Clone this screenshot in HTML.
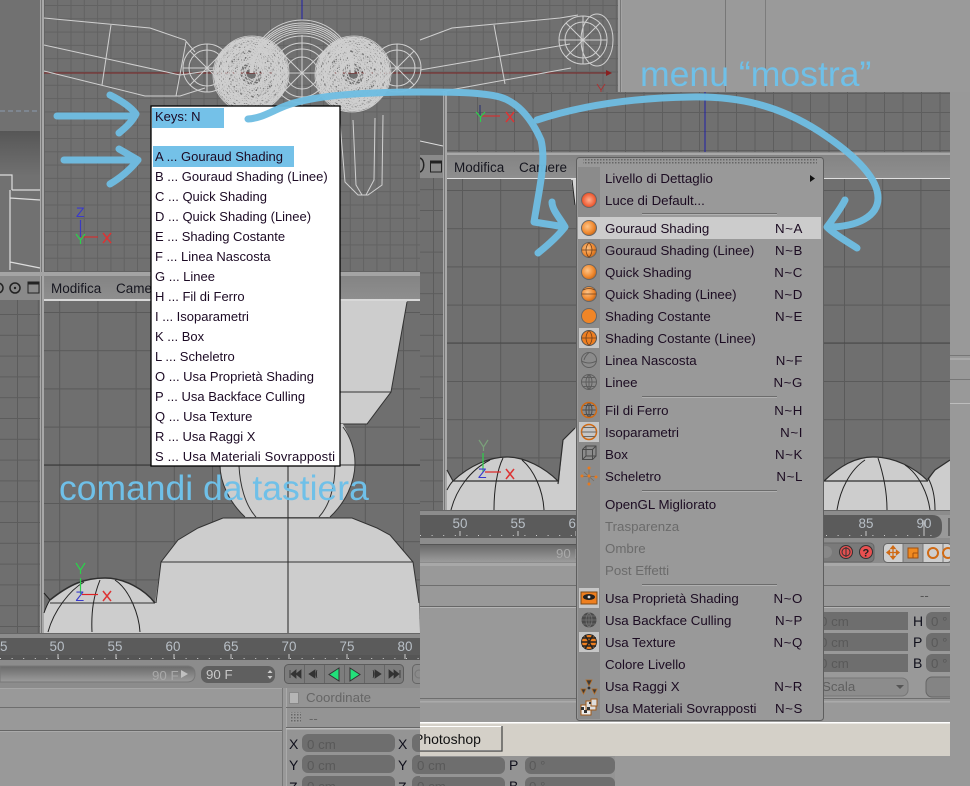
<!DOCTYPE html>
<html><head><meta charset="utf-8"><style>
html,body{margin:0;padding:0;background:#999}
svg{display:block;font-family:"Liberation Sans",sans-serif}
.m{font-size:13.3px;fill:#1c0c22}
.s{font-size:13.3px;fill:#1c0c22;letter-spacing:.6px}
.d{font-size:13.3px;fill:#6b6b6b}
.k{font-size:13px;fill:#1c0a24}
.t{font-size:13.4px;fill:#b8bfc6}
.f{font-size:13.3px;fill:#595959}
.l{font-size:14px;fill:#10101c}
</style></head><body>
<svg width="970" height="786" viewBox="0 0 970 786" xmlns="http://www.w3.org/2000/svg">
<defs>
<clipPath id="c2"><rect x="420" y="92" width="530" height="664"/></clipPath>
<pattern id="g1" width="13.3" height="13.3" x="4" y="5" patternUnits="userSpaceOnUse"><rect width="13.3" height="13.3" fill="#707070"/><rect width="1" height="13.3" fill="#626262"/><rect width="13.3" height="1" fill="#626262"/></pattern>
<pattern id="g2" width="38.2" height="38.2" x="21" y="312" patternUnits="userSpaceOnUse"><rect width="38.2" height="38.2" fill="#6f6f6f"/><rect width="1" height="38.2" fill="#5a5a5a"/><rect width="38.2" height="1" fill="#5a5a5a"/></pattern>
<pattern id="g3" width="38.2" height="38.2" x="462" y="190" patternUnits="userSpaceOnUse"><rect width="38.2" height="38.2" fill="#6f6f6f"/><rect width="1" height="38.2" fill="#5a5a5a"/><rect width="38.2" height="1" fill="#5a5a5a"/></pattern>
<pattern id="g4" width="18.5" height="19" x="847" y="112" patternUnits="userSpaceOnUse"><rect width="18.5" height="19" fill="#707070"/><rect width="1" height="19" fill="#5e5e5e"/><rect width="18.5" height="1" fill="#5e5e5e"/></pattern>
<pattern id="g5" width="20.8" height="20.8" x="17" y="2" patternUnits="userSpaceOnUse"><rect width="20.8" height="20.8" fill="#6f6f6f"/><rect width="1" height="20.8" fill="#5c5c5c"/><rect width="20.8" height="1" fill="#5c5c5c"/></pattern>
<pattern id="hat" width="3" height="3" patternUnits="userSpaceOnUse"><rect width="3" height="3" fill="#999"/><rect width="1.5" height="1.5" fill="#666"/></pattern>
<linearGradient id="sl" x1="0" y1="0" x2="0" y2="1"><stop offset="0" stop-color="#6a6a6a"/><stop offset="1" stop-color="#9c9c9c"/></linearGradient>
<linearGradient id="tb" x1="0" y1="0" x2="0" y2="1"><stop offset="0" stop-color="#848484"/><stop offset="1" stop-color="#8e8e8e"/></linearGradient>
<linearGradient id="gnd" x1="0" y1="0" x2="0" y2="1"><stop offset="0" stop-color="#565656"/><stop offset=".2" stop-color="#5c5c5c"/><stop offset="1" stop-color="#707070"/></linearGradient>
<radialGradient id="or" cx=".4" cy=".4" r=".7"><stop offset="0" stop-color="#fdc488"/><stop offset=".6" stop-color="#f08a30"/><stop offset="1" stop-color="#b85c14"/></radialGradient>
<radialGradient id="rd" cx=".5" cy=".5" r=".6"><stop offset="0" stop-color="#fdb090"/><stop offset=".7" stop-color="#ee5d35"/><stop offset="1" stop-color="#b03818"/></radialGradient>
<g id="sph" fill="none" stroke="#cfcfcf" stroke-width=".8">
<circle r="37"/><circle r="34"/><circle r="30"/>
<ellipse rx="36" ry="12"/><ellipse rx="36" ry="12" transform="rotate(15)"/><ellipse rx="36" ry="12" transform="rotate(30)"/><ellipse rx="36" ry="12" transform="rotate(45)"/><ellipse rx="36" ry="12" transform="rotate(60)"/><ellipse rx="36" ry="12" transform="rotate(75)"/><ellipse rx="36" ry="12" transform="rotate(90)"/><ellipse rx="36" ry="12" transform="rotate(105)"/><ellipse rx="36" ry="12" transform="rotate(120)"/><ellipse rx="36" ry="12" transform="rotate(135)"/><ellipse rx="36" ry="12" transform="rotate(150)"/><ellipse rx="36" ry="12" transform="rotate(165)"/>
<ellipse rx="36" ry="25"/><ellipse rx="36" ry="25" transform="rotate(20)"/><ellipse rx="36" ry="25" transform="rotate(40)"/><ellipse rx="36" ry="25" transform="rotate(60)"/><ellipse rx="36" ry="25" transform="rotate(80)"/><ellipse rx="36" ry="25" transform="rotate(100)"/><ellipse rx="36" ry="25" transform="rotate(120)"/><ellipse rx="36" ry="25" transform="rotate(140)"/><ellipse rx="36" ry="25" transform="rotate(160)"/>
<ellipse rx="28" ry="18" transform="rotate(10)"/><ellipse rx="28" ry="18" transform="rotate(50)"/><ellipse rx="28" ry="18" transform="rotate(95)"/><ellipse rx="28" ry="18" transform="rotate(140)"/>
<ellipse rx="22" ry="6" transform="rotate(25)"/><ellipse rx="22" ry="6" transform="rotate(70)"/><ellipse rx="22" ry="6" transform="rotate(115)"/><ellipse rx="22" ry="6" transform="rotate(160)"/>
</g>
<g id="wheel" fill="none" stroke="#d0d0d0" stroke-width="1"><circle r="24"/><circle r="18"/><path d="M-24 0H24M0-24V24M-17-17L17 17M-17 17L17-17"/></g>
<g id="orb"><circle r="7.5" fill="url(#or)" stroke="#666" stroke-width="1"/></g>
</defs>

<rect width="970" height="786" fill="#999"/>

<!-- ===== layer 1: top ===== -->
<rect x="622" y="0" width="348" height="92" fill="#9a9a9a"/>
<rect x="725" y="0" width="1" height="92" fill="#777"/><rect x="765" y="0" width="1" height="92" fill="#7c7c7c"/>
<rect x="44" y="0" width="574" height="272" fill="url(#g1)"/>
<rect x="0" y="0" width="40" height="272" fill="#717171"/>
<rect x="0" y="131" width="40" height="44" fill="url(#gnd)"/>
<path d="M0 111H40" stroke="#8a9ab0" stroke-width="1" stroke-dasharray="5 3"/>
<path d="M0 175H12V190M12 190H40M10 198L40 200M10 190V270M10 262L40 268" fill="none" stroke="#ddd" stroke-width="1.2"/>
<rect x="40" y="0" width="4" height="276" fill="#a8a8a8"/><rect x="41" y="0" width="1" height="276" fill="#777"/>
<rect x="618" y="0" width="4" height="92" fill="#a4a4a4"/><rect x="620" y="0" width="1" height="92" fill="#777"/>
<path d="M44 73H606" stroke="#7d2424" stroke-width="1"/>
<path d="M302 0V20" stroke="#1f1fa8" stroke-width="1"/>
<path d="M606 70L612 73L606 76Z" fill="#8a1f1f"/>
<path d="M597 84L601 90L605 84M601 90V94" stroke="#a33" fill="none"/>
<!-- wireframe -->
<g fill="none" stroke="#d0d0d0" stroke-width="1">
<path d="M44 18L150 28L185 40L195 52M44 45L180 75L215 70M44 71L145 96L180 96L205 88M111 25L102 85M186 42L176 96"/>
<path d="M420 40L452 28L560 18M420 70L570 44M420 98L450 90L571 68M494 25L505 84M560 18L578 15"/>
<path d="M340 123L345 182L358 195H368L382 185L383 115M353 120L356 185L362 195M375 118L374 180L366 195"/>
<path d="M250 73A52 53 0 0 1 354 73M251 73A51 50 0 0 1 353 73M252 73A50 48 0 0 1 352 73M253 73A49 46 0 0 1 351 73M255 73A47 44 0 0 1 349 73M257 73A45 42 0 0 1 347 73M259 73A43 40 0 0 1 345 73M262 73A40 37 0 0 1 342 73"/>
<circle cx="302" cy="73" r="16"/><circle cx="302" cy="73" r="24"/><circle cx="302" cy="73" r="30"/>
<path d="M272 73H332M302 35V111M281 52L323 94M281 94L323 52"/>
</g>
<use href="#sph" x="252" y="73"/><use href="#sph" x="352" y="75"/>
<use href="#sph" x="250" y="75"/><use href="#sph" x="354" y="73"/>
<use href="#wheel" x="207" y="68"/><use href="#wheel" x="397" y="68"/><use href="#wheel" x="583" y="40"/>
<ellipse cx="597" cy="40" rx="16" ry="26" fill="none" stroke="#d0d0d0"/>

<!-- axes top-left -->
<g fill="none" stroke-width="1.2">
<path d="M80.5 220V237" stroke="#3a3ac0"/><path d="M81 237H98" stroke="#c33"/>
<path d="M76 234L80.5 240L85 234M80.5 240V244" stroke="#2bd24a"/>
<path d="M103 233L111 243M111 233L103 243" stroke="#d33" stroke-width="1.5"/>
</g>
<text x="76" y="217" font-size="14" fill="#3a3acc">Z</text>

<!-- ===== layer 1: lower viewport ===== -->
<rect x="0" y="272" width="420" height="4" fill="#a4a4a4"/>
<rect x="0" y="276" width="40" height="24" fill="#8a8a8a"/>
<rect x="44" y="276" width="376" height="24" fill="url(#tb)"/>
<rect x="44" y="299" width="376" height="2" fill="#d8d8d8"/>
<rect x="0" y="300" width="40" height="333" fill="url(#g5)"/>
<rect x="44" y="301" width="376" height="332" fill="url(#g2)"/>
<rect x="40" y="276" width="4" height="357" fill="#a8a8a8"/><rect x="41" y="276" width="1" height="357" fill="#777"/>
<circle cx="-2" cy="288" r="5" fill="none" stroke="#222" stroke-width="1.5"/>
<circle cx="15" cy="288" r="5" fill="none" stroke="#222" stroke-width="1.5"/><circle cx="15" cy="288" r="1.2" fill="#222"/>
<rect x="28" y="282" width="11" height="11" fill="none" stroke="#222" stroke-width="1"/><rect x="28" y="282" width="11" height="2.5" fill="#222"/>
<text x="51" y="293" font-size="13.5" fill="#16161f">Modifica</text>
<text x="116" y="293" font-size="13.5" fill="#16161f">Camere</text>

<!-- layer1 shapes -->
<path d="M169 301H407L391 392L367 424H209L185 392Z" fill="#cdcdcd"/>
<path d="M407 302L391 392L367 424H340M340 392H391" fill="none" stroke="#333" stroke-width="1"/>
<path d="M209 424H343C350 436 355 450 355 463C355 483 345 503 330 517H245C230 503 220 483 220 465C220 450 225 436 233 424Z" fill="#cdcdcd"/>
<path d="M343 427C350 436 355 450 355 463C355 483 345 503 330 517M220 465C220 483 230 503 245 517" fill="none" stroke="#333"/>
<path d="M239 466C240 485 245 505 256 517M335 466C335 485 330 505 319 517" fill="none" stroke="#333"/>
<path d="M223 518H352L377 528L390 535L413 562L419 603L420 633H44V613L50 600C70 584 85 578 105 578C125 578 145 590 155 603L161 562L178 540L198 528Z" fill="#cdcdcd"/>
<path d="M44 465H420" stroke="#333" stroke-width="1"/>
<path d="M288 301V633" stroke="#222" stroke-width="1"/>
<path d="M223 518H352L377 528L390 535L413 562L419 603M161 562H413M223 518L198 528L178 540L161 562L156 603" fill="none" stroke="#333" stroke-width="1"/>
<path d="M50 603H155" stroke="#333" fill="none"/>
<path d="M50 600C70 584 85 578 105 578C125 578 145 590 155 603" fill="none" stroke="#2e2e2e" stroke-width="1.5"/>
<path d="M44 593L50 600M44 613C46 607 48 603 50 600M48 632C54 610 70 590 84 582M92 632C91 610 94 595 100 580M140 632C139 615 130 590 115 580" fill="none" stroke="#222" stroke-width="1"/>
<g fill="none" stroke-width="1.2">
<path d="M80.5 578V594" stroke="#2bd24a"/><path d="M76 563L80.5 570L85 563M80.5 570V574" stroke="#2bd24a"/>
<path d="M82 594.5H98" stroke="#d22"/>
<path d="M103 591L111 601M111 591L103 601" stroke="#d33" stroke-width="1.5"/>
</g>
<text x="75.5" y="601" font-size="14" fill="#3a3acc">Z</text>

<!-- timeline 1 -->
<rect x="0" y="633" width="420" height="5" fill="#8c8c8c"/><rect x="0" y="633" width="420" height="1" fill="#666"/>
<rect x="0" y="638" width="420" height="22" fill="#5b5b5b"/>
<rect x="0" y="655" width="420" height="5" fill="#555"/>
<g class="t" text-anchor="middle"><text class="t" x="0" y="651">45</text><text class="t" x="57" y="651">50</text><text class="t" x="115" y="651">55</text><text class="t" x="173" y="651">60</text><text class="t" x="231" y="651">65</text><text class="t" x="289" y="651">70</text><text class="t" x="347" y="651">75</text><text class="t" x="405" y="651">80</text></g>
<path d="M58 654V659M116 654V659M174 654V659M231 654V659M289 654V659M347 654V659M405 654V659" stroke="#ccc"/>
<path d="M0 658.5H420" stroke="#cfcfcf" stroke-dasharray="1 10.6"/>
<rect x="0" y="660" width="420" height="28" fill="#8c8c8c"/>
<path d="M0 666H187Q195 666 195 674T187 682H0Z" fill="url(#sl)" stroke="#777"/>
<text x="152" y="680" font-size="13.3" fill="#a9a9a9">90 F</text>
<path d="M181 670L188 674L181 678Z" fill="#c0c0c0"/>
<rect x="201" y="666" width="74" height="17" rx="7" fill="#5f5f5f"/>
<text x="206" y="679" font-size="13.3" fill="#c8c8c8">90 F</text>
<path d="M270 670L272.5 673H267.5ZM270 679L272.5 676H267.5Z" fill="#ccc"/>
<rect x="284.5" y="664.5" width="119" height="19" rx="4" fill="#7d7d7d" stroke="#5c5c5c"/>
<path d="M304.5 665V683M324.5 665V683M344.5 665V683M364.5 665V683M384.5 665V683" stroke="#666"/>
<path d="M290 670V678M291 674L296 670V678ZM296 674L301 670V678Z" fill="#333" stroke="#333" stroke-width=".8"/>
<path d="M315 670L309 674L315 678ZM317 670Q315 674 317 678" fill="#333" stroke="#333" stroke-width=".8"/>
<path d="M339 668L329 674.5L339 681Z" fill="#22e07a" stroke="#333"/>
<path d="M350 668L360 674.5L350 681Z" fill="#22e07a" stroke="#333"/>
<path d="M373 670Q375 674 373 678M375 670L381 674L375 678Z" fill="#333" stroke="#333" stroke-width=".8"/>
<path d="M389 670L394 674L389 678ZM394 670L399 674L394 678ZM400 670V678" fill="#333" stroke="#333" stroke-width=".8"/>
<rect x="412.5" y="664.5" width="12" height="19" rx="4" fill="#8a8a8a" stroke="#666"/>
<circle cx="419" cy="674" r="4" fill="none" stroke="#777"/>

<!-- bottom left panels -->
<rect x="0" y="688" width="283" height="98" fill="#999"/>
<rect x="0" y="688" width="283" height="1" fill="#a6a6a6"/>
<rect x="0" y="707" width="283" height="1" fill="#6e6e6e"/>
<rect x="0" y="730" width="283" height="1" fill="#666"/><rect x="0" y="731" width="283" height="1" fill="#aaa"/>
<rect x="282" y="688" width="1" height="98" fill="#777"/>
<rect x="286" y="688" width="134" height="98" fill="#949494"/>
<rect x="286" y="688" width="1" height="98" fill="#aaa"/>
<rect x="289.5" y="692.5" width="9" height="11" fill="#b5b5b5" stroke="#888"/>
<text x="306" y="702" font-size="13.3" fill="#666">Coordinate</text>
<rect x="286" y="707" width="134" height="1" fill="#6e6e6e"/>
<rect x="290" y="712" width="11" height="11" fill="url(#hat)"/>
<text x="309" y="723" font-size="13" fill="#666">--</text>
<rect x="286" y="727" width="134" height="1" fill="#666"/><rect x="286" y="728" width="134" height="1.5" fill="#bbb"/>
<text class="l" x="289" y="749">X</text><text class="l" x="398" y="749">X</text>
<text class="l" x="289" y="770">Y</text><text class="l" x="398" y="770">Y</text>
<text class="l" x="289" y="792">Z</text><text class="l" x="398" y="792">Z</text>
<rect x="302" y="734" width="93" height="18" rx="6" fill="#6e6e6e"/><rect x="412" y="734" width="20" height="18" rx="6" fill="#6e6e6e"/>
<rect x="302" y="755" width="93" height="18" rx="6" fill="#6e6e6e"/><rect x="412" y="755" width="93" height="18" rx="6" fill="#6e6e6e"/>
<rect x="302" y="776" width="93" height="18" rx="6" fill="#6e6e6e"/><rect x="412" y="776" width="93" height="18" rx="6" fill="#6e6e6e"/>
<text class="f" x="307" y="749">0 cm</text><text class="f" x="307" y="770">0 cm</text><text class="f" x="307" y="791">0 cm</text>

<!-- ===== bottom strip under layer 2 ===== -->
<rect x="420" y="756" width="550" height="30" fill="#999"/>
<rect x="420" y="756" width="195" height="30" fill="#949494"/>
<rect x="420" y="757" width="85" height="17" rx="6" fill="#6e6e6e"/><rect x="420" y="777" width="85" height="17" rx="6" fill="#6e6e6e"/>
<rect x="412" y="757" width="20" height="17" rx="6" fill="#6e6e6e"/><rect x="412" y="777" width="20" height="17" rx="6" fill="#6e6e6e"/>
<text class="f" x="417" y="770">0 cm</text><text class="f" x="417" y="791">0 cm</text>
<text class="l" x="509" y="770">P</text><text class="l" x="509" y="791">B</text>
<rect x="525" y="757" width="90" height="17" rx="6" fill="#6e6e6e"/><rect x="525" y="777" width="90" height="17" rx="6" fill="#6e6e6e"/>
<text class="f" x="529" y="770">0 °</text><text class="f" x="529" y="791">0 °</text>

<!-- ===== layer 2 ===== -->
<g clip-path="url(#c2)">
<rect x="420" y="92" width="530" height="630" fill="#999"/>
<rect x="420" y="92" width="23" height="63" fill="#646464"/>
<path d="M420 141L443 146" stroke="#ddd" stroke-width="1"/>
<rect x="447" y="92" width="503" height="60" fill="url(#g4)"/>
<path d="M705 92V152" stroke="#1f1fa8"/>
<g fill="none" stroke-width="1.2">
<path d="M481 116H500" stroke="#c33"/>
<path d="M480 105V116" stroke="#333a70"/>
<path d="M476 112L480.5 117L485 112M480.5 117V122" stroke="#2bd24a"/>
<path d="M506 112L514 122M514 112L506 122" stroke="#d33" stroke-width="1.5"/>
</g>
<rect x="447" y="152" width="503" height="3" fill="#8e8e8e"/><rect x="447" y="153.5" width="503" height="1" fill="#c4c4c4"/>
<rect x="420" y="155" width="23" height="23" fill="#8a8a8a"/>
<rect x="430.5" y="161" width="11" height="11" fill="none" stroke="#222"/><rect x="430.5" y="161" width="11" height="2.5" fill="#222"/>
<path d="M420 158C425 160 425 170 420 172" fill="none" stroke="#222" stroke-width="1.5"/>
<rect x="447" y="155" width="503" height="23" fill="url(#tb)"/>
<rect x="447" y="178" width="503" height="1.5" fill="#e0e0e0"/>
<rect x="420" y="178" width="23" height="332" fill="url(#g5)"/>
<rect x="447" y="179" width="503" height="331" fill="url(#g3)"/>
<rect x="443" y="92" width="4" height="420" fill="#a8a8a8"/><rect x="444" y="92" width="1" height="420" fill="#777"/>
<path d="M447 343H950" stroke="#474747"/>
<text x="454" y="172" font-size="13.5" fill="#16161f">Modifica</text>
<text x="519" y="172" font-size="13.5" fill="#16161f">Camere</text>
<path d="M571 179H577V205L575 205L571 179Z" fill="#d4d4d4"/><path d="M572 180L575 205" stroke="#222"/>

<!-- layer2 shapes -->
<path d="M447 510V470L453 481C470 465 490 457 507 457C525 457 545 468 558 481L559 483L563 440L575 428L590 425V510Z" fill="#cdcdcd"/>
<path d="M453 481C470 465 490 457 507 457C525 457 545 468 558 481M453 481H558M558 484L563 440L575 428M447 470L453 481" fill="none" stroke="#2e2e2e" stroke-width="1.2"/>
<path d="M447 490C449 486 451 483 453 481M451 510C456 490 470 470 490 460M494 510C494 490 497 470 503 458M544 510C543 490 534 470 522 460" fill="none" stroke="#222"/>
<g fill="none" stroke-width="1.2"><path d="M483 453V472" stroke="#2bd24a"/><path d="M479 440L483.5 447L488 440M483.5 447V451" stroke="#7aa07a"/><path d="M485 472H501" stroke="#d22"/>
<path d="M506 469L514 479M514 469L506 479" stroke="#d33" stroke-width="1.5"/></g>
<text x="478" y="478" font-size="14" fill="#3a3acc">Z</text>
<path d="M824 510V481C840 466 855 457 873 457C895 457 915 468 928 481L935 470L950 460V510Z" fill="#cdcdcd"/>
<path d="M824 481C840 466 855 457 873 457C895 457 915 468 928 481M824 481H928M928 479L935 470L950 460" fill="none" stroke="#2e2e2e" stroke-width="1.2"/>
<path d="M837 510C840 490 850 470 865 460M887 510C887 490 882 470 878 458M930 510C928 495 920 475 905 465M935 510C935 495 932 485 928 478" fill="none" stroke="#222"/>

<!-- timeline 2 -->
<rect x="420" y="510" width="530" height="5" fill="#8c8c8c"/><rect x="420" y="510" width="530" height="1" fill="#666"/>
<path d="M420 515H932Q942 515 942 525V528Q942 538 932 538H420Z" fill="#5b5b5b"/>
<rect x="948" y="518" width="3" height="18" fill="#666"/>
<g text-anchor="middle"><text class="t" x="460" y="528">50</text><text class="t" x="518" y="528">55</text><text class="t" x="576" y="528">60</text><text class="t" x="866" y="528">85</text><text class="t" x="924" y="528">90</text></g>
<path d="M460 531V536M518 531V536M576 531V536M866 531V536M924 520V536" stroke="#c8c8c8"/>
<path d="M420 535.500H942" stroke="#cfcfcf" stroke-dasharray="1 10.600"/>
<rect x="420" y="538" width="530" height="28" fill="#8c8c8c"/>
<rect x="420" y="544" width="157" height="1" fill="#555"/>
<rect x="420" y="545" width="157" height="17" fill="url(#sl)"/>
<text x="556" y="558" font-size="13.3" fill="#a9a9a9">90 F</text>
<rect x="420" y="563" width="157" height="3" fill="#a8a8a8"/>
<rect x="824" y="563" width="126" height="3" fill="#a8a8a8"/>
<rect x="810" y="543" width="64" height="19" rx="4" fill="#7a7a7a" stroke="#666"/>
<circle cx="826" cy="552" r="6" fill="#888"/>
<circle cx="846" cy="552" r="6.5" fill="#e35050" stroke="#333"/><path d="M842 552a4 4 0 0 1 8 0a4 4 0 0 1-8 0M846 547V557" fill="none" stroke="#333"/>
<circle cx="866" cy="552" r="6.5" fill="#e85050" stroke="#333"/><text x="862.5" y="556.500" font-size="11" font-weight="bold" fill="#222">?</text>
<rect x="883.5" y="543.500" width="68" height="19" rx="4" fill="#cfcfcf" stroke="#666"/>
<rect x="903" y="544" width="20" height="18" fill="#9a9a9a"/>
<path d="M903 544V562M923 544V562M943 544V562" stroke="#777"/>
<path d="M893 546V559M887 552.5H899M893 546L891 548.5H895ZM893 559L891 556.5H895ZM887 552.5L889.5 550.5V554.5ZM899 552.5L896.5 550.5V554.5Z" stroke="#d06a14" stroke-width="1.3" fill="#d06a14"/>
<rect x="908" y="548" width="10" height="10" fill="#f08a20" stroke="#a05010"/><path d="M913 553H918M913 553V558" stroke="#a05010"/>
<circle cx="933" cy="553" r="5" fill="none" stroke="#d06a14" stroke-width="2"/>
<circle cx="948" cy="553" r="5" fill="none" stroke="#d06a14" stroke-width="2"/>

<!-- panel layer2 -->
<rect x="420" y="566" width="530" height="156" fill="#999"/>
<rect x="420" y="585" width="530" height="1" fill="#6e6e6e"/>
<rect x="420" y="606" width="530" height="1" fill="#666"/><rect x="420" y="607" width="530" height="1" fill="#b4b4b4"/>
<rect x="420" y="698" width="530" height="1" fill="#6e6e6e"/><rect x="420" y="701" width="530" height="1.5" fill="#aaa"/>
<text x="920" y="600" font-size="13" fill="#555">--</text>
<rect x="815" y="612" width="93" height="18" fill="#6e6e6e"/><rect x="815" y="633" width="93" height="18" fill="#6e6e6e"/><rect x="815" y="654" width="93" height="18" fill="#6e6e6e"/>
<text class="f" x="820" y="626">0 cm</text><text class="f" x="820" y="647">0 cm</text><text class="f" x="820" y="668">0 cm</text>
<text class="l" x="913" y="626">H</text><text class="l" x="913" y="647">P</text><text class="l" x="913" y="668">B</text>
<rect x="926" y="612" width="30" height="18" rx="6" fill="#6e6e6e"/><rect x="926" y="633" width="30" height="18" rx="6" fill="#6e6e6e"/><rect x="926" y="654" width="30" height="18" rx="6" fill="#6e6e6e"/>
<text class="f" x="931" y="626">0 °</text><text class="f" x="931" y="647">0 °</text><text class="f" x="931" y="668">0 °</text>
<rect x="805" y="678" width="103" height="18" rx="6" fill="#8c8c8c" stroke="#777"/>
<text x="822" y="691" font-size="13.3" fill="#5f5f5f">Scala</text>
<path d="M896 685H904L900 689Z" fill="#555"/>
<rect x="926" y="677" width="30" height="20" rx="6" fill="#848484" stroke="#666"/>

<!-- beige -->
<rect x="420" y="722" width="530" height="34" fill="#d4d0c8"/>
<rect x="420" y="722" width="530" height="1.5" fill="#fff"/>
<path d="M420 726.5H502V750.5H420" fill="none" stroke="#fff"/>
<path d="M502 726V751H420" fill="none" stroke="#404040" stroke-width="1.2"/>
<text x="414" y="744" font-size="14" fill="#111">Photoshop</text>
</g>

<!-- right edge details -->
<rect x="950" y="355" width="20" height="1" fill="#777"/><rect x="950" y="358" width="20" height="2" fill="#aaa"/>
<rect x="950" y="379" width="20" height="1" fill="#777"/><rect x="950" y="403" width="20" height="1" fill="#bdbdbd"/>

<!-- ===== popup menu ===== -->
<rect x="576.5" y="157.5" width="247" height="563" rx="3" fill="#999" stroke="#5e5e5e"/>
<rect x="583" y="159" width="234" height="6" fill="url(#hat)"/>
<rect x="578" y="167" width="22" height="552" fill="#8b8b8b"/>
<rect x="578" y="217" width="243" height="22" fill="#cccccc"/>
<rect x="579" y="328" width="20" height="20" fill="#c6c6c6"/>
<rect x="579" y="422" width="20" height="20" fill="#c6c6c6"/>
<rect x="579" y="588" width="20" height="20" fill="#c6c6c6"/>
<rect x="579" y="632" width="20" height="20" fill="#c6c6c6"/>
<path d="M642 213.5H777M642 396.5H777M642 490.5H777M642 584.5H777" stroke="#6c6c6c" stroke-width="1"/>
<path d="M642 214.5H777M642 397.5H777M642 491.5H777M642 585.5H777" stroke="#b0b0b0" stroke-width="1"/>

<g>
<text class="m" x="605" y="183">Livello di Dettaglio</text>
<path d="M810 175L815 178.5L810 182Z" fill="#111"/>
<text class="m" x="605" y="205">Luce di Default...</text>
<text class="m" x="605" y="233">Gouraud Shading</text>
<text class="m" x="605" y="255">Gouraud Shading (Linee)</text>
<text class="m" x="605" y="277">Quick Shading</text>
<text class="m" x="605" y="299">Quick Shading (Linee)</text>
<text class="m" x="605" y="321">Shading Costante</text>
<text class="m" x="605" y="343">Shading Costante (Linee)</text>
<text class="m" x="605" y="365">Linea Nascosta</text>
<text class="m" x="605" y="387">Linee</text>
<text class="m" x="605" y="415">Fil di Ferro</text>
<text class="m" x="605" y="437">Isoparametri</text>
<text class="m" x="605" y="459">Box</text>
<text class="m" x="605" y="481">Scheletro</text>
<text class="m" x="605" y="509">OpenGL Migliorato</text>
<text class="d" x="605" y="531">Trasparenza</text>
<text class="d" x="605" y="553">Ombre</text>
<text class="d" x="605" y="575">Post Effetti</text>
<text class="m" x="605" y="603">Usa Proprietà Shading</text>
<text class="m" x="605" y="625">Usa Backface Culling</text>
<text class="m" x="605" y="647">Usa Texture</text>
<text class="m" x="605" y="669">Colore Livello</text>
<text class="m" x="605" y="691">Usa Raggi X</text>
<text class="m" x="605" y="713">Usa Materiali Sovrapposti</text>
</g>
<g text-anchor="end">
<text class="s" x="803" y="233">N~A</text><text class="s" x="803" y="255">N~B</text><text class="s" x="803" y="277">N~C</text><text class="s" x="803" y="299">N~D</text><text class="s" x="803" y="321">N~E</text>
<text class="s" x="803" y="365">N~F</text><text class="s" x="803" y="387">N~G</text><text class="s" x="803" y="415">N~H</text><text class="s" x="803" y="437">N~I</text><text class="s" x="803" y="459">N~K</text><text class="s" x="803" y="481">N~L</text>
<text class="s" x="803" y="603">N~O</text><text class="s" x="803" y="625">N~P</text><text class="s" x="803" y="647">N~Q</text><text class="s" x="803" y="691">N~R</text><text class="s" x="803" y="713">N~S</text>
</g>

<!-- menu icons -->
<circle cx="589" cy="200" r="7.5" fill="url(#rd)" stroke="#666"/>
<use href="#orb" x="589" y="228"/>
<use href="#orb" x="589" y="250"/><path d="M581.5 250H596.5M589 242.5C585 247 585 253 589 257.5M589 242.5C593 247 593 253 589 257.5" stroke="#70401c" fill="none" stroke-width=".8"/>
<use href="#orb" x="589" y="272"/>
<use href="#orb" x="589" y="294"/><path d="M581.5 294H596.5M583 290Q589 287 595 290" stroke="#70401c" fill="none" stroke-width=".8"/>
<circle cx="589" cy="316" r="7.5" fill="#f08526" stroke="#666"/>
<circle cx="589" cy="338" r="7.5" fill="#ee7f22" stroke="#555"/><path d="M581.5 338H596.5M589 330.5C585 335 585 341 589 345.5M589 330.5C593 335 593 341 589 345.5" stroke="#70401c" fill="none" stroke-width=".8"/>
<g fill="none" stroke="#5e5e5e" stroke-width="1"><circle cx="589" cy="360" r="7.5"/><path d="M581.5 361Q589 365 596.5 361M589 352.5Q585 356 584 360"/>
<circle cx="589" cy="382" r="7.5"/><path d="M581.5 382H596.5M589 374.5V389.5M583 377.5H595M583 386.5H595M589 374.5C585 378 585 386 589 389.5M589 374.5C593 378 593 386 589 389.5"/></g>
<g fill="none" stroke="#4e4e4e" stroke-width="1"><path d="M581.5 410H596.5M589 402.5V417.5M583 405.5H595M583 414.5H595M589 402.5C585 406 585 414 589 417.5M589 402.5C593 406 593 414 589 417.5"/></g>
<circle cx="589" cy="410" r="7.5" fill="none" stroke="#d06a14" stroke-width="1.5"/>
<circle cx="589" cy="432" r="7.5" fill="none" stroke="#d06a14" stroke-width="1.5"/><path d="M581.5 432H596.5M583 427.5H595M583 436.5H595" stroke="#666" fill="none"/>
<path d="M582.5 449.5H592.5V459.5H582.5ZM586 446H596V456H586ZM582.5 449.5L586 446M592.5 449.5L596 446M592.5 459.5L596 456M582.5 459.5L586 456" fill="none" stroke="#4a4a4a"/>
<path d="M581 476.5H597M589 469V484M584 472L594 481" stroke="#7a6a5a" stroke-width=".8"/>
<g fill="#e87a1e"><circle cx="589" cy="468" r="1.5"/><circle cx="582" cy="476" r="1.5"/><circle cx="596" cy="477" r="1.5"/><circle cx="589" cy="484" r="1.5"/><circle cx="589" cy="476" r="1.5"/></g>
<rect x="581" y="592" width="16" height="12" fill="#ef7f1f" stroke="#7a4a1a"/>
<ellipse cx="589" cy="597" rx="6" ry="3" fill="#222"/><circle cx="589" cy="597" r="1.4" fill="#ddd"/>
<circle cx="589" cy="620" r="7.5" fill="#4a4a4a"/><path d="M581.5 620H596.5M589 612.5V627.5M583 616H595M583 624H595M589 612.5C585 616 585 624 589 627.5M589 612.5C593 616 593 624 589 627.5" stroke="#777" stroke-width=".7" fill="none"/>
<circle cx="589" cy="642" r="7.5" fill="#ef7f1f" stroke="#333"/><path d="M581.5 642H596.5M585 635L593 649M593 635L585 649M582 638H596M582 646H596" stroke="#222" stroke-width="1.5" fill="none"/>
<path d="M586 680H592L589 686ZM581 689L586 689L583.5 694ZM592 689L597 689L594.5 694Z" fill="#3a3a3a" stroke="#b56a20" stroke-width=".8"/><circle cx="589" cy="688" r="1.4" fill="#333"/>
<rect x="581" y="705" width="10" height="10" fill="#eee" stroke="#a05a1a"/><rect x="586" y="701" width="10" height="9" fill="#ddd" stroke="#a05a1a"/><rect x="591" y="699" width="6" height="7" fill="#ddd" stroke="#a05a1a"/>
<path d="M581 707H584V710H581ZM584 710H587V713H584ZM587 707H590V710H587ZM589 702H591V704H589Z" fill="#333"/>

<!-- ===== Keys popup ===== -->
<rect x="151" y="106" width="189" height="360" fill="#fff" stroke="#000" stroke-width="1.3"/>
<rect x="152" y="108" width="72" height="20" fill="#74c1e8"/>
<rect x="153" y="146" width="141" height="21" fill="#74c1e8"/>
<text class="k" x="155" y="121">Keys: N</text>
<text class="k" x="155" y="161">A ... Gouraud Shading</text>
<text class="k" x="155" y="181">B ... Gouraud Shading (Linee)</text>
<text class="k" x="155" y="201">C ... Quick Shading</text>
<text class="k" x="155" y="221">D ... Quick Shading (Linee)</text>
<text class="k" x="155" y="241">E ... Shading Costante</text>
<text class="k" x="155" y="261">F ... Linea Nascosta</text>
<text class="k" x="155" y="281">G ... Linee</text>
<text class="k" x="155" y="301">H ... Fil di Ferro</text>
<text class="k" x="155" y="321">I ... Isoparametri</text>
<text class="k" x="155" y="341">K ... Box</text>
<text class="k" x="155" y="361">L ... Scheletro</text>
<text class="k" x="155" y="381">O ... Usa Proprietà Shading</text>
<text class="k" x="155" y="401">P ... Usa Backface Culling</text>
<text class="k" x="155" y="421">Q ... Usa Texture</text>
<text class="k" x="155" y="441">R ... Usa Raggi X</text>
<text class="k" x="155" y="461" textLength="180">S ... Usa Materiali Sovrapposti</text>

<!-- ===== annotations ===== -->
<text x="640" y="86" font-size="35.6" fill="#6fc0e8">menu “mostra”</text>
<text x="59" y="500" font-size="35.5" fill="#6fc0e8">comandi da tastiera</text>
<g fill="none" stroke="#6fbde2" stroke-width="7" stroke-linecap="round" stroke-linejoin="round" opacity=".96">
<path d="M57 116H135M110 95C120 100 130 106 136 114C132 122 125 128 119 133"/>
<path d="M64 160H137M119 149L138 160M138 160C130 170 120 178 110 184"/>
<path d="M248 119C262 118 270 112 285 106C310 96 360 92 420 92C450 92 480 92 500 97C520 103 533 122 541 140C546 160 540 185 536 210L534 222L565 227M552 202C552 210 560 218 565 227C558 236 548 245 538 253"/>
<path d="M537 120C580 106 630 98 690 97C740 96 780 106 820 132C855 155 878 178 878 198C878 216 858 227 828 227M845 200C840 210 832 220 827 227C835 235 848 242 857 248"/>
</g>
</svg>
</body></html>
